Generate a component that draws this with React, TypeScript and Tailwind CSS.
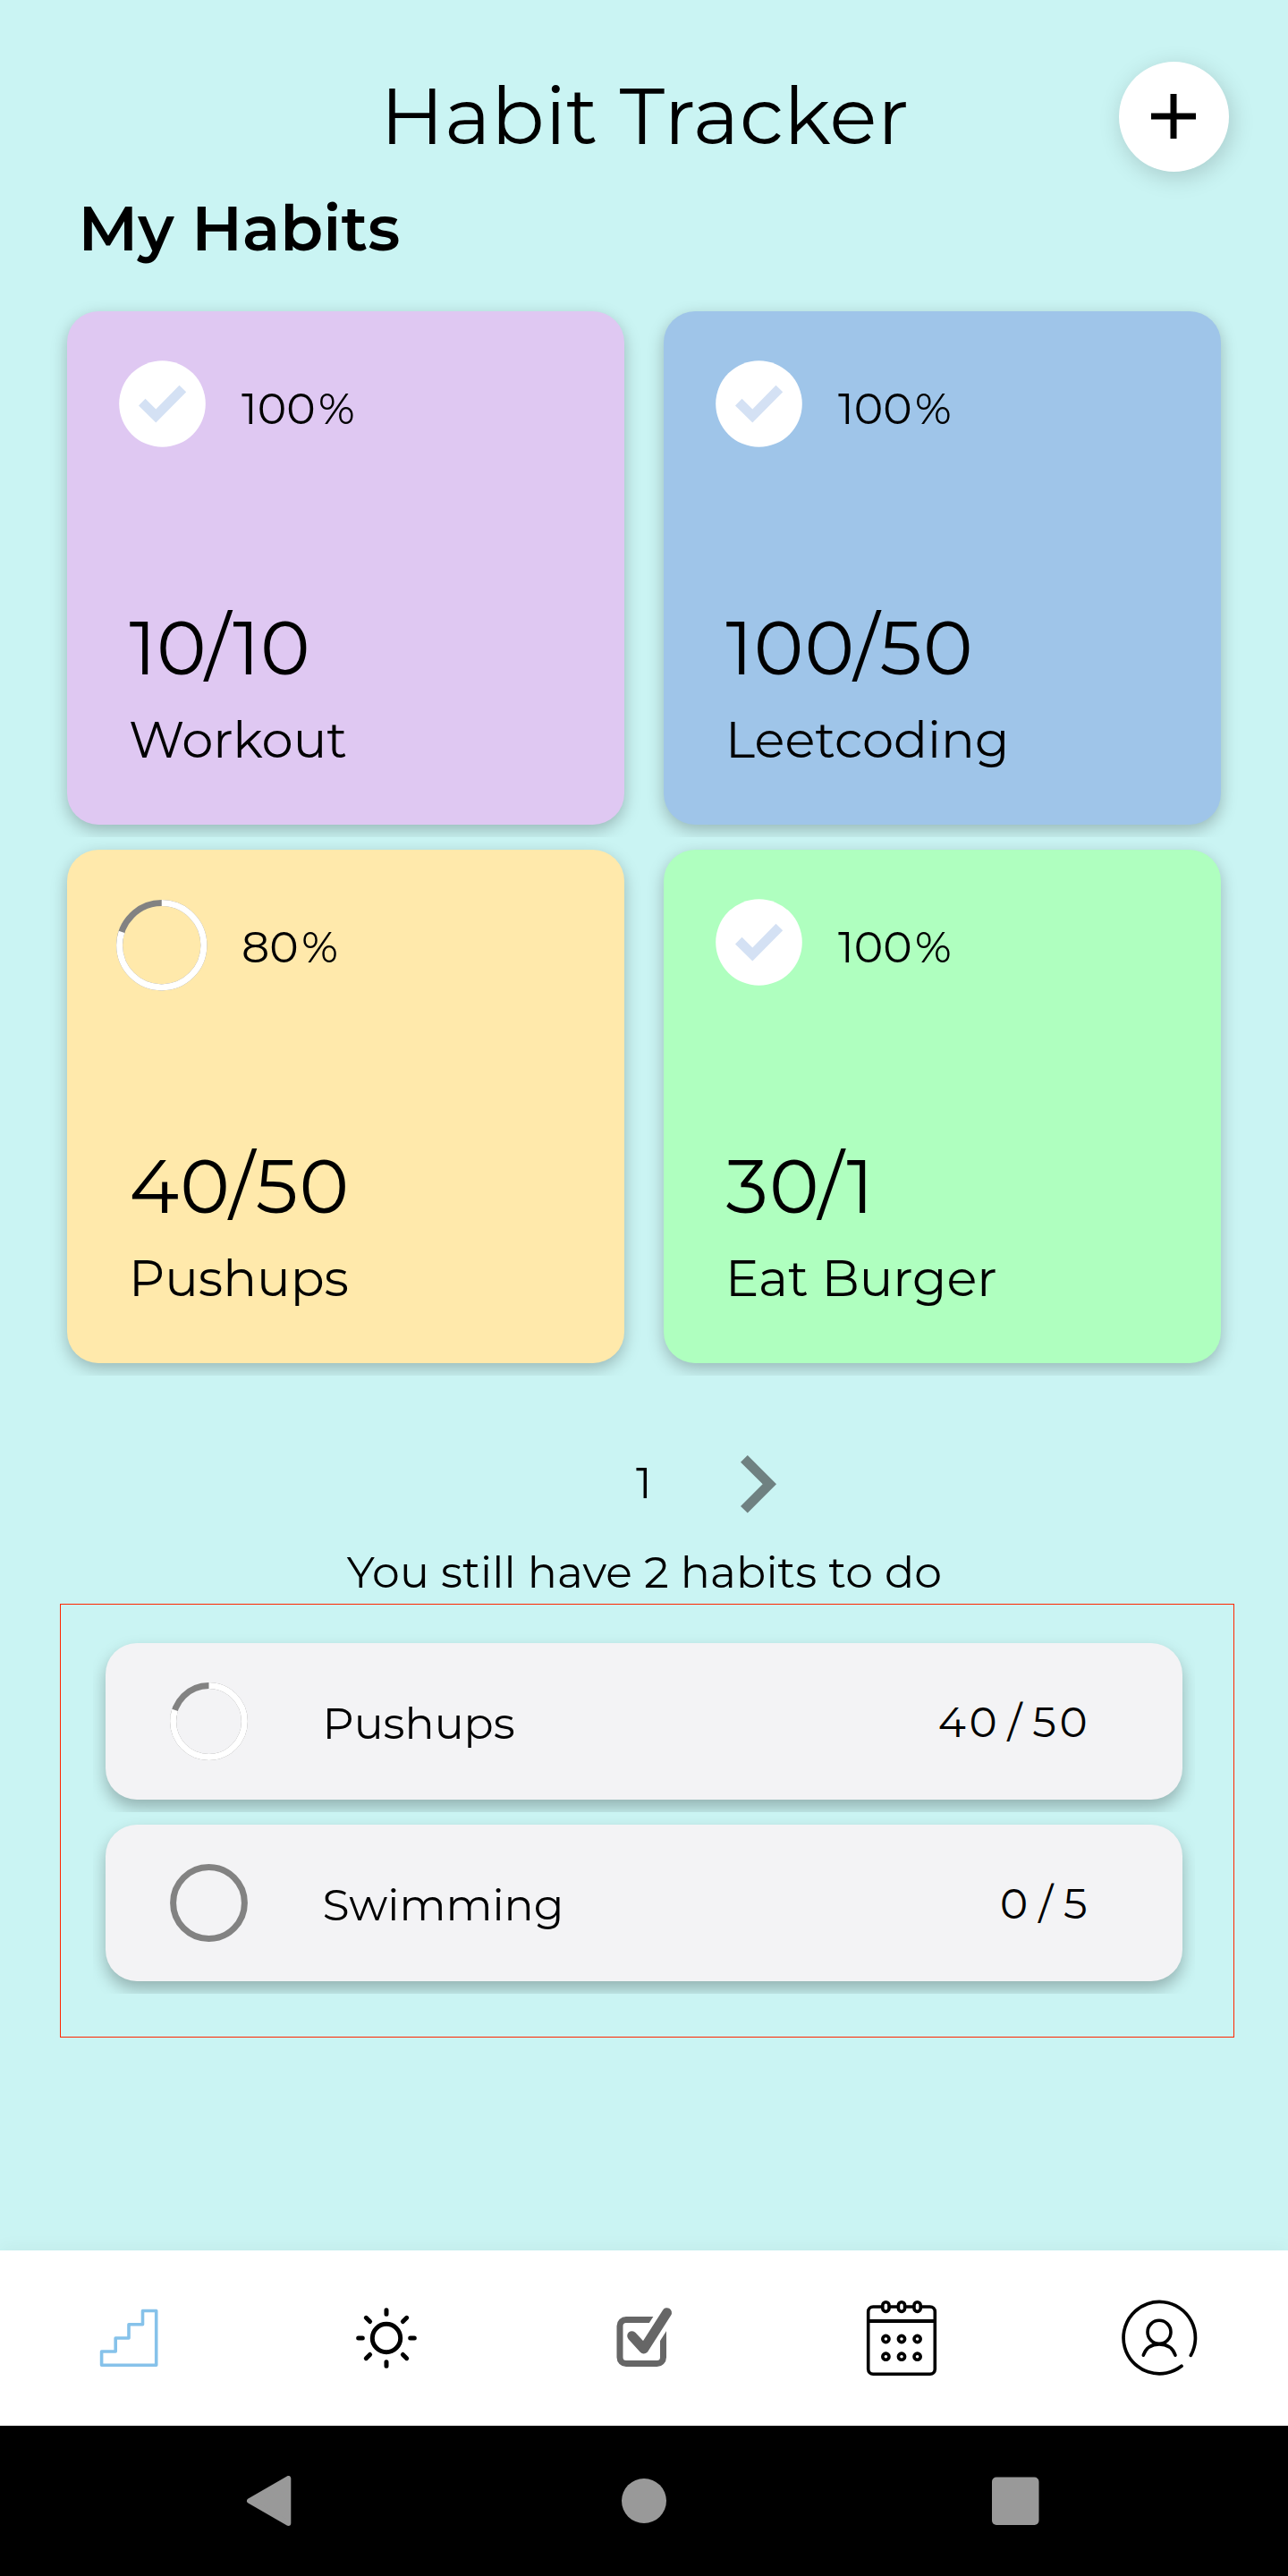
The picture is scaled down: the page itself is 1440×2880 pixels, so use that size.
import type { ReactNode } from "react";

type Habit = {
  name: string;
  done: number;
  goal: number;
  color: string;
  tracking: string;
};

const habits: Habit[] = [
  { name: "Workout", done: 10, goal: 10, color: "bg-[#dfc8f2]", tracking: "tracking-[0.3px]" },
  { name: "Leetcoding", done: 100, goal: 50, color: "bg-[#9fc5e9]", tracking: "tracking-[1px]" },
  { name: "Pushups", done: 40, goal: 50, color: "bg-[#ffe9ab]", tracking: "tracking-[1.2px]" },
  { name: "Eat Burger", done: 30, goal: 1, color: "bg-[#afffbf]", tracking: "tracking-[1px]" },
];

const todo = [
  { name: "Pushups", done: 40, goal: 50 },
  { name: "Swimming", done: 0, goal: 5 },
];

function ProgressRing({ size, value }: { size: number; value: number }) {
  const c = size / 2;
  const r = c - 3.6;
  const length = 2 * Math.PI * r;
  return (
    <svg width={size} height={size} viewBox={`0 0 ${size} ${size}`} fill="none" strokeWidth="7">
      <circle cx={c} cy={c} r={r} stroke="#828282" />
      {value > 0 && (
        <circle
          cx={c}
          cy={c}
          r={r}
          stroke="#ffffff"
          strokeDasharray={`${length * value} ${length}`}
          transform={`rotate(-90 ${c} ${c})`}
        />
      )}
    </svg>
  );
}

function DoneBadge() {
  return (
    <svg width="97" height="97" viewBox="0 0 97 97" className="ml-[3px]">
      <circle cx="48.5" cy="48.5" r="48.3" fill="#ffffff" />
      <path d="M22 50.5 L29.5 42.8 L41.3 54.5 L67.5 27.7 L75.2 35.3 L41.3 69.5 Z" fill="#d4e1f4" />
    </svg>
  );
}

function HabitCard({ habit }: { habit: Habit }) {
  const ratio = Math.min(1, habit.done / habit.goal);
  return (
    <div className="overflow-hidden px-[22px] py-[14px]">
      <article
        className={`flex h-[574px] w-[623px] flex-col rounded-[35px] pt-[55px] shadow-[0_6px_18px_rgba(0,0,0,0.25)] ${habit.color}`}
      >
        <div className="flex h-[110px] items-start pl-[55px]">
          <div className="w-[140px]">
            {ratio >= 1 ? (
              <DoneBadge />
            ) : (
              <div className="pt-[1px]">
                <ProgressRing size={101.5} value={ratio} />
              </div>
            )}
          </div>
          <p className="mt-[24px] text-[49px] leading-[60px]">
            {Math.round(ratio * 100)}
            <span className="ml-[3.5px]">%</span>
          </p>
        </div>
        <p className={`mt-[160px] pl-[69.5px] text-[84px] leading-[102px] ${habit.tracking}`}>
          {habit.done}/{habit.goal}
        </p>
        <p className="mt-[18px] pl-[69px] text-[56px] leading-[68px]">{habit.name}</p>
      </article>
    </div>
  );
}

function TodoRow({ name, done, goal }: { name: string; done: number; goal: number }) {
  return (
    <li className="overflow-hidden p-[14px]">
      <div className="flex h-[175px] items-center rounded-[35px] bg-[#f3f3f5] pr-[103px] pl-[72px] shadow-[0_9px_18px_rgba(0,0,0,0.27)]">
        <ProgressRing size={87} value={done / goal} />
        <p className="ml-[83.5px] flex-1 pt-[4px] text-[49px] leading-[60px]">{name}</p>
        <p className="pt-[3px] text-[47px] leading-[58px] tracking-[3.5px]">
          {done}
          <span className="mx-[8.5px]">/</span>
          {goal}
        </p>
      </div>
    </li>
  );
}

function TabIcon({ children }: { children: ReactNode }) {
  return (
    <button className="flex items-center justify-center">
      <svg width="84" height="84" viewBox="0 0 84 84" fill="none" stroke="#000000" className="overflow-visible">
        {children}
      </svg>
    </button>
  );
}

function TabBar() {
  return (
    <nav className="grid h-[196px] grid-cols-5 bg-white shadow-[0_-4px_18px_rgba(0,0,0,0.04)]">
      <TabIcon>
        <path
          d="M11.6 72.3 V57 H27.2 V42 H42 V26.7 H57.5 V11.5 H72.7 V72.3 Z"
          stroke="#86c2ea"
          strokeWidth="3.6"
          strokeLinejoin="round"
        />
      </TabIcon>
      <TabIcon>
        <circle cx="42" cy="42" r="15.7" strokeWidth="5" />
        <path
          d="M42 10.7 V15.3 M42 68.7 V73.3 M10.7 42 H15.3 M68.7 42 H73.3 M19.3 19.3 L23.6 23.6 M60.4 60.4 L64.7 64.7 M19.3 64.7 L23.6 60.4 M60.4 23.6 L64.7 19.3"
          strokeWidth="5"
          strokeLinecap="round"
        />
      </TabIcon>
      <TabIcon>
        <path
          d="M58 21.5 H22 a7 7 0 0 0 -7 7 V63.5 a7 7 0 0 0 7 7 H56.5 a7 7 0 0 0 7 -7 V30"
          stroke="#666666"
          strokeWidth="7"
        />
        <path d="M41.8 54 L71 8.4" stroke="#ffffff" strokeWidth="21" />
        <path
          d="M28.6 39.6 L41.8 54 L67.6 13.6"
          stroke="#666666"
          strokeWidth="10.8"
          strokeLinecap="round"
          strokeLinejoin="round"
        />
      </TabIcon>
      <TabIcon>
        <rect x="4.7" y="7" width="74.6" height="75.3" rx="5.5" strokeWidth="3.6" />
        <path d="M4.7 23 H79.3" strokeWidth="4" />
        {[24.4, 42, 59.6].map((x) => (
          <g key={x} strokeWidth="3.6">
            <rect x={x - 3.6} y="1.8" width="7.2" height="10.6" rx="3.6" fill="#ffffff" />
            <circle cx={x} cy="43" r="3.6" />
            <circle cx={x} cy="62.7" r="3.6" />
          </g>
        ))}
      </TabIcon>
      <TabIcon>
        <path d="M77.3 61.3 A40.2 40.2 0 1 0 67 73.3" strokeWidth="3.7" strokeLinecap="round" />
        <circle cx="42" cy="35.3" r="13" strokeWidth="3.6" />
        <path d="M24.3 61.2 C27 53.5 33 48.9 42 48.9 C51 48.9 57.3 53.5 60 61.2" strokeWidth="3.6" strokeLinecap="round" />
      </TabIcon>
    </nav>
  );
}

function SystemBar() {
  return (
    <div className="h-[168px] bg-black">
      <div className="mx-auto grid h-full w-[1251px] grid-cols-3 place-items-center">
        <svg width="56" height="56" viewBox="0 0 56 56" fill="#999999" stroke="#999999">
          <path d="M47.3 3 V53 L4 28 Z" strokeWidth="6" strokeLinejoin="round" />
        </svg>
        <svg width="56" height="56" viewBox="0 0 56 56" fill="#999999">
          <circle cx="28" cy="28" r="25" />
        </svg>
        <svg width="56" height="56" viewBox="0 0 56 56" fill="#999999">
          <rect x="0" y="1.5" width="52.5" height="53.5" rx="5" />
        </svg>
      </div>
    </div>
  );
}

export default function App() {
  return (
    <div className="flex h-[2880px] w-[1440px] flex-col overflow-hidden bg-[#caf4f3] font-['Montserrat','Inter',sans-serif] font-normal text-black">
      <header className="mt-[69px] grid h-[123px] shrink-0 grid-cols-[1fr_auto_1fr] items-center px-[66px]">
        <h1 className="col-start-2 pb-[3px] pl-[2px] text-[87.5px] leading-[107px] tracking-[0.7px]">Habit Tracker</h1>
        <button
          aria-label="Add habit"
          className="flex size-[123px] items-center justify-center justify-self-end rounded-full bg-white shadow-[3px_6px_26px_rgba(0,0,0,0.17)]"
        >
          <svg width="50" height="50" viewBox="0 0 50 50" stroke="#000000" strokeWidth="7" className="mr-[1px] mb-[1px]">
            <path d="M25 0 V50 M0 25 H50" />
          </svg>
        </button>
      </header>

      <h2 className="mt-[20px] pl-[87.5px] text-[70px] leading-[86px] font-semibold">My Habits</h2>

      <section className="mx-[53px] mt-[36px] grid grid-cols-[667px_667px]">
        {habits.map((habit) => (
          <HabitCard key={habit.name} habit={habit} />
        ))}
      </section>

      <div className="mt-[89px] grid h-[65px] grid-cols-[1fr_18px_1fr] items-start">
        <span className="col-start-2 pt-[1px] text-[49px] leading-[60px]">1</span>
        <button aria-label="Next page" className="ml-[99px] w-[40px]">
          <svg width="40" height="65" viewBox="0 0 40 65" fill="#6f8181">
            <path d="M7.8 0 L40 32.3 L7.8 64.6 L0 57 L24.7 32.3 L0 7.7 Z" />
          </svg>
        </button>
      </div>

      <p className="mt-[36px] pl-[1px] text-center text-[49px] leading-[60px] tracking-[0.1px]">
        You still have 2 habits to do
      </p>

      <ul className="mt-[5px] ml-[67px] h-[485px] w-[1313px] shrink-0 border border-[#ff2600] pt-[29px] pr-[43px] pl-[36px]">
        {todo.map((item) => (
          <TodoRow key={item.name} {...item} />
        ))}
      </ul>

      <div className="mt-auto">
        <TabBar />
        <SystemBar />
      </div>
    </div>
  );
}
